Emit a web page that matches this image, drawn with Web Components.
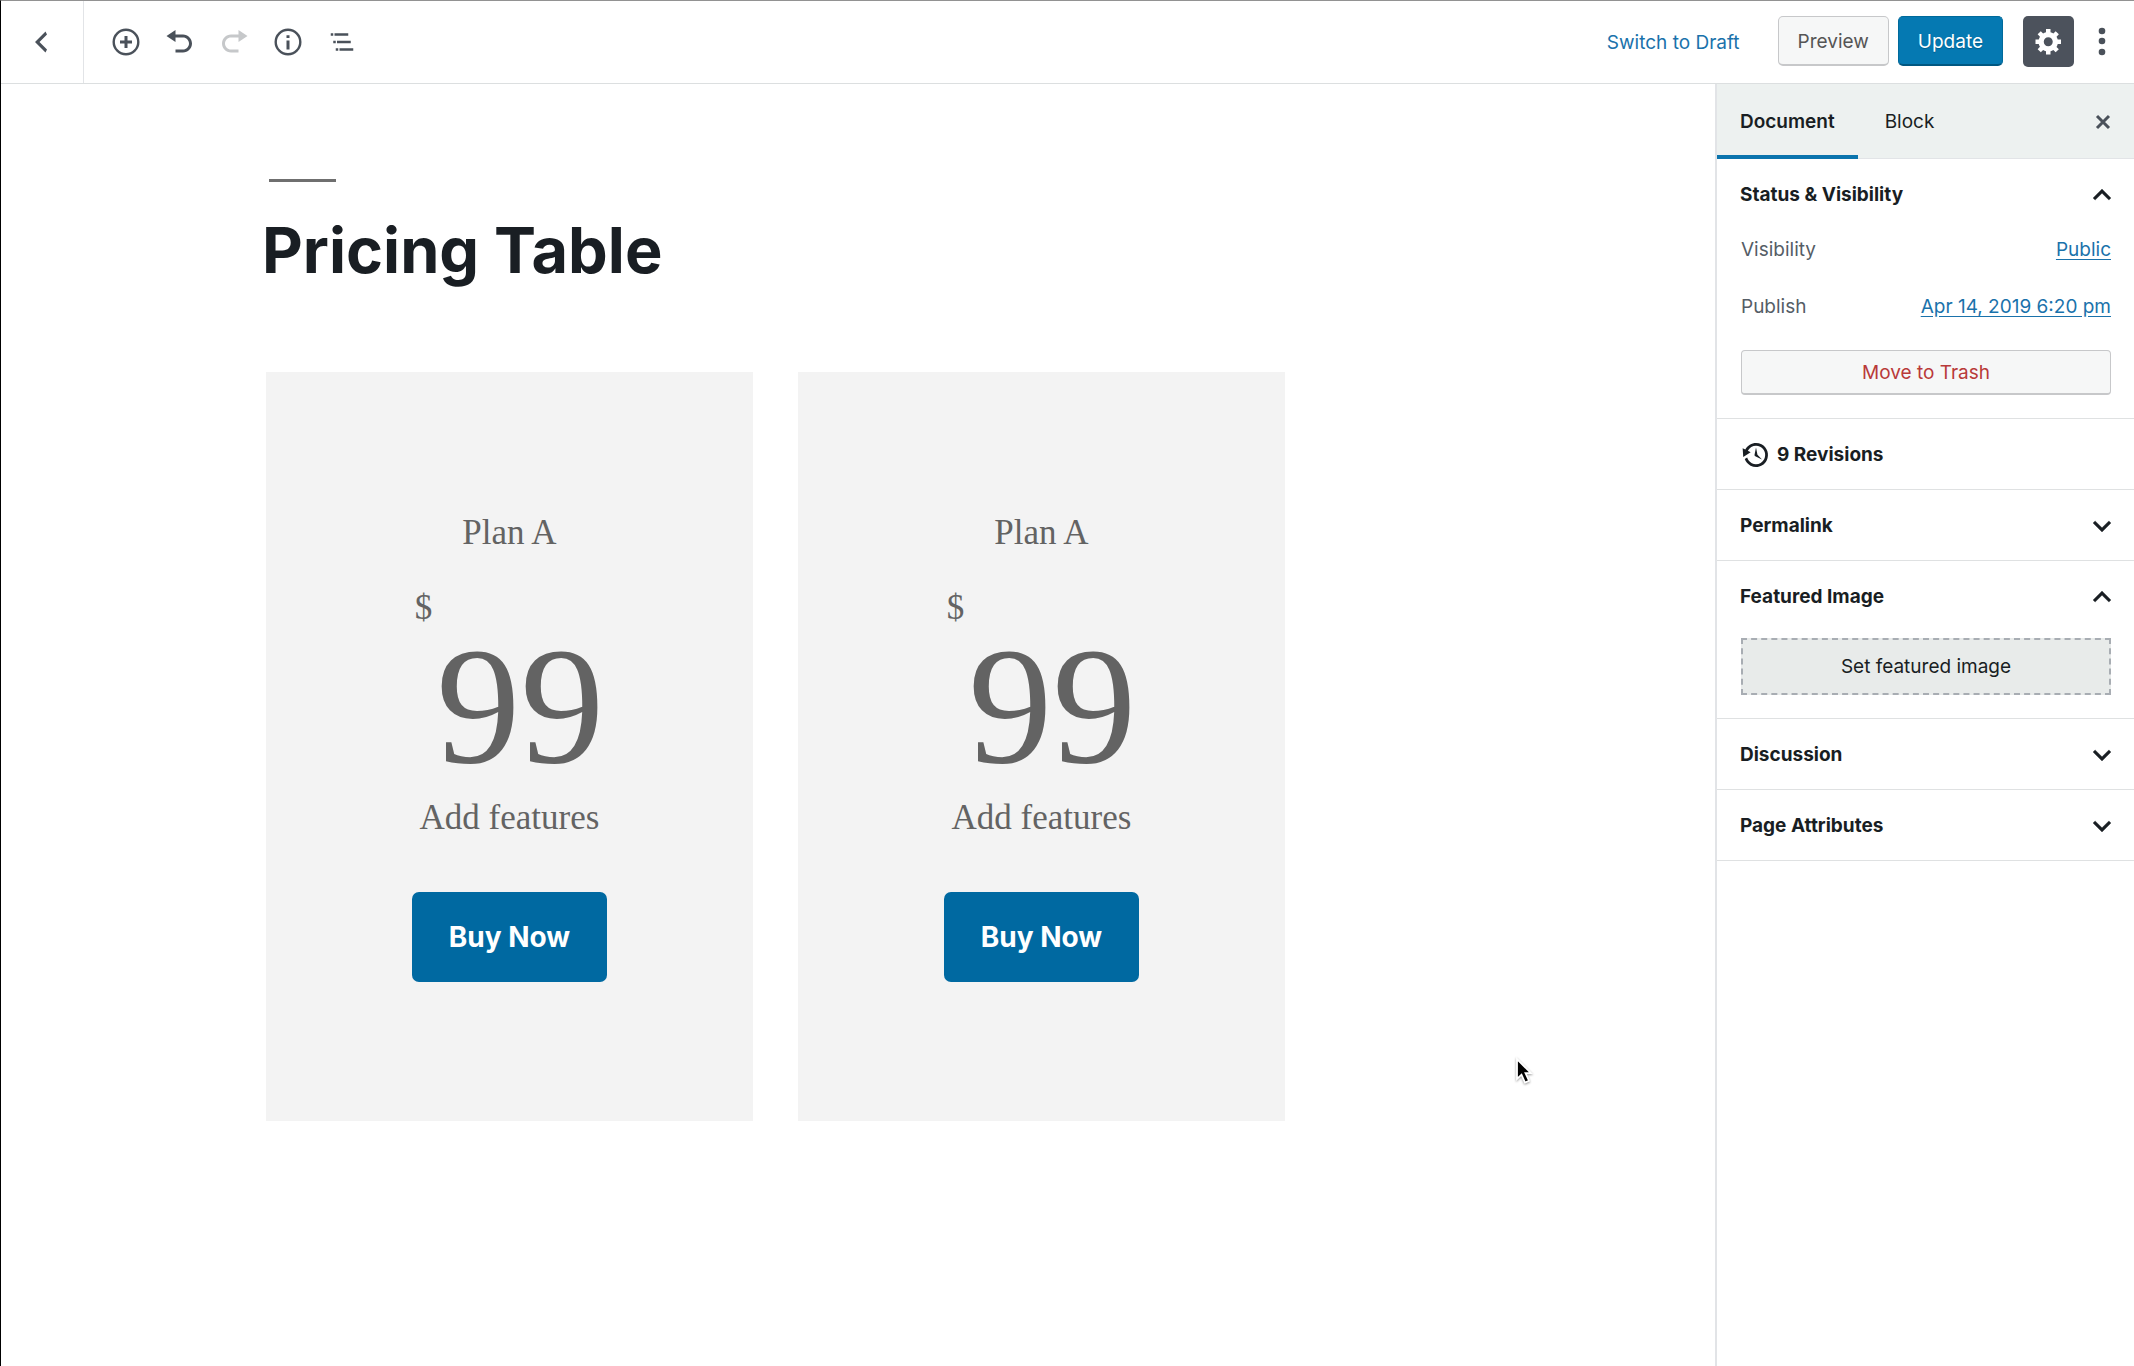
<!DOCTYPE html>
<html lang="en">
<head>
<meta charset="utf-8">
<title>Edit Page</title>
<style>
  body {
    margin: 0;
    background: #fff;
    color: #191e23;
    font-family: Inter, "Liberation Sans", sans-serif;
    font-size: 19px;
    line-height: 28px;
  }
</style>
</head>
<body>
<editor-app>
  <editor-header slot="header"></editor-header>
  <page-canvas slot="canvas">
    <pricing-card plan="Plan A" currency="$" price="99" features="Add features">Buy Now</pricing-card>
    <pricing-card plan="Plan A" currency="$" price="99" features="Add features">Buy Now</pricing-card>
  </page-canvas>
  <editor-sidebar slot="sidebar">
    <panel-section heading="Status &amp; Visibility" open>
      <status-panel></status-panel>
    </panel-section>
    <revisions-link count="9"></revisions-link>
    <panel-section heading="Permalink"></panel-section>
    <panel-section heading="Featured Image" open>
      <featured-image></featured-image>
    </panel-section>
    <panel-section heading="Discussion"></panel-section>
    <panel-section heading="Page Attributes"></panel-section>
  </editor-sidebar>
</editor-app>
<mouse-pointer></mouse-pointer>

<script>
const baseStyle = `
  * { box-sizing: border-box; }
  button { font: inherit; color: inherit; margin: 0; padding: 0; border: 0; background: none; cursor: pointer; }
  svg { display: block; fill: currentColor; }
`;

class BaseElement extends HTMLElement {
  constructor() {
    super();
    this.attachShadow({ mode: "open" });
  }

  connectedCallback() {
    this.shadowRoot.innerHTML = `<style>${baseStyle}</style>${this.template()}`;
  }
}

class EditorApp extends BaseElement {
  template() {
    return `
      <style>
        :host {
          display: flex;
          flex-direction: column;
          min-height: 100vh;
          box-sizing: border-box;
          border-top: 1px solid #929292;
          border-left: 1px solid #000;
        }
        .body { display: flex; flex: 1; }
      </style>
      <slot name="header"></slot>
      <div class="body">
        <slot name="canvas"></slot>
        <slot name="sidebar"></slot>
      </div>
    `;
  }
}

class EditorHeader extends BaseElement {
  template() {
    return `
      <style>
        :host {
          display: flex;
          align-items: center;
          justify-content: space-between;
          height: 83px;
          box-sizing: border-box;
          border-bottom: 1px solid #dcdfe0;
          color: #4a515a;
        }
        .tools, .actions { display: flex; align-items: center; }
        .actions { padding-bottom: 2px; }
        .tools { align-self: stretch; gap: 24px; }
        .back {
          display: flex;
          align-items: center;
          justify-content: center;
          align-self: stretch;
          width: 83px;
          margin-right: 3px;
          padding-right: 3px;
          border-right: 1px solid #e2e4e7;
        }
        button[disabled] { color: #c6c8ca; }
        .switch { color: #1a72ab; margin-right: 38px; padding-top: 3px; }
        .preview, .update {
          height: 50px;
          padding: 3px 19px 0;
          border: 1px solid #c7c8ca;
          border-bottom-width: 2px;
          border-radius: 5px;
          background: #f6f7f7;
          color: #555;
        }
        .update {
          margin: 0 20px 0 9px;
          border-color: #006a9b #006a9b #005781;
          background: #0579b2;
          color: #fff;
          text-shadow: 0 1px 1px #005d8c;
        }
        .settings {
          display: flex;
          align-items: center;
          justify-content: center;
          width: 51px;
          height: 51px;
          border-radius: 5px;
          background: #4c525c;
          color: #fff;
        }
        .more { margin: 0 17px 0 13px; }
      </style>
      <div class="tools">
        <button class="back" aria-label="View pages"><svg width="30" height="30" viewBox="0 0 20 20"><path d="M14 5l-5 5 5 5-1 2-7-7 7-7z"/></svg></button>
        <button aria-label="Add block"><svg width="30" height="30" viewBox="0 0 20 20"><path d="M10 1a9 9 0 1 0 0 18 9 9 0 0 0 0-18zm0 16.400a7.400 7.400 0 1 1 0-14.800 7.400 7.400 0 0 1 0 14.800zM11 6H9v3H6v2h3v3h2v-3h3V9h-3z"/></svg></button>
        <button aria-label="Undo"><svg width="30" height="30" viewBox="0 0 20 20"><path d="M12 5H7V2L1 6l6 4V7h5c2.200 0 4 1.800 4 4s-1.800 4-4 4H7v2h5c3.300 0 6-2.700 6-6s-2.700-6-6-6z"/></svg></button>
        <button aria-label="Redo" disabled><svg width="30" height="30" viewBox="0 0 20 20"><path d="M8 5h5V2l6 4-6 4V7H8c-2.200 0-4 1.800-4 4s1.800 4 4 4h5v2H8c-3.300 0-6-2.700-6-6s2.700-6 6-6z"/></svg></button>
        <button aria-label="Content structure"><svg width="30" height="30" viewBox="0 0 20 20"><path d="M10 1a9 9 0 1 0 0 18 9 9 0 0 0 0-18zm0 16.400a7.400 7.400 0 1 1 0-14.800 7.400 7.400 0 0 1 0 14.800zM9 9h2v6H9zM9 5.500h2v1.800H9z"/></svg></button>
        <button aria-label="Block navigation"><svg width="30" height="30" viewBox="0 0 24 24"><path d="M5 5H3v2h2V5zm3 8h11v-2H8v2zm9-8H6v2h11V5zM7 11H5v2h2v-2zm0 8h2v-2H7v2zm3-2v2h11v-2H10z"/></svg></button>
      </div>
      <div class="actions">
        <button class="switch">Switch to Draft</button>
        <button class="preview">Preview</button>
        <button class="update">Update</button>
        <button class="settings" aria-label="Settings"><svg width="30" height="30" viewBox="0 0 20 20"><path d="M18 12h-2.180c-.170.700-.440 1.350-.810 1.930l1.540 1.540-2.100 2.100-1.540-1.540c-.580.360-1.230.630-1.910.790V19H8v-2.180c-.680-.160-1.330-.430-1.910-.790l-1.540 1.540-2.120-2.120 1.540-1.540c-.360-.580-.630-1.230-.790-1.910H1V9.030h2.170c.160-.700.440-1.350.800-1.940L2.430 5.550l2.100-2.100 1.540 1.540c.580-.370 1.240-.640 1.930-.810V2h3v2.180c.680.160 1.330.430 1.910.790l1.540-1.540 2.120 2.120-1.540 1.540c.360.590.640 1.240.800 1.940H18V12zm-8.500 1.500c1.660 0 3-1.340 3-3s-1.340-3-3-3-3 1.340-3 3 1.340 3 3 3z"/></svg></button>
        <button class="more" aria-label="More"><svg width="30" height="30" viewBox="0 0 30 30"><circle cx="15" cy="5" r="3.300"/><circle cx="15" cy="15" r="3.300"/><circle cx="15" cy="26" r="3.300"/></svg></button>
      </div>
    `;
  }
}

class PageCanvas extends BaseElement {
  template() {
    return `
      <style>
        :host { display: block; flex: 1; padding: 95px 0 0 265px; }
        hr { width: 67px; height: 3px; margin: 0 0 0 3px; border: 0; background: #6f6f6f; }
        h1 { margin: 30px 0 84px -4px; font-size: 63px; line-height: 76px; font-weight: 700; }
        .columns { display: grid; grid-template-columns: 1fr 1fr; gap: 45px; max-width: 1019px; }
      </style>
      <hr>
      <h1>Pricing Table</h1>
      <div class="columns"><slot></slot></div>
    `;
  }
}

class PricingCard extends BaseElement {
  template() {
    return `
      <style>
        :host {
          display: flex;
          flex-direction: column;
          align-items: center;
          box-sizing: border-box;
          padding: 136px 20px 139px;
          background: #f3f3f3;
          color: #636363;
          font-family: "Liberation Serif", serif;
          font-size: 35px;
          line-height: 50px;
        }
        p { margin: 0; }
        .price { display: flex; gap: 4px; margin: 25px 0 8px; }
        .amount { padding-top: 42px; font-size: 168px; line-height: 160px; }
        button {
          height: 90px;
          margin-top: 49px;
          padding: 0 37px;
          border-radius: 7px;
          background: #0069a1;
          color: #fff;
          font: 700 28px/40px Inter, "Liberation Sans", sans-serif;
        }
      </style>
      <p>${this.getAttribute("plan")}</p>
      <div class="price">
        <span>${this.getAttribute("currency")}</span>
        <span class="amount">${this.getAttribute("price")}</span>
      </div>
      <p>${this.getAttribute("features")}</p>
      <button><slot></slot></button>
    `;
  }
}

class EditorSidebar extends BaseElement {
  template() {
    return `
      <style>
        :host {
          display: block;
          flex: none;
          width: 419px;
          box-sizing: border-box;
          border-left: 2px solid #e2e4e7;
        }
        .tabs {
          display: flex;
          height: 75px;
          border-bottom: 1px solid #e2e4e7;
          background: #edf1f0;
        }
        .tabs button { padding: 4px 23px 0; border-bottom: 4px solid transparent; margin-bottom: -1px; }
        .tabs .active { margin-right: 4px; border-bottom-color: #0b74ad; font-weight: 600; }
        .tabs .close { margin-left: auto; color: #4a515a; }
      </style>
      <div class="tabs">
        <button class="active">Document</button>
        <button>Block</button>
        <button class="close" aria-label="Close settings"><svg width="16" height="16" viewBox="0 0 16 16"><path d="M2 2l12 12M14 2L2 14" stroke="currentColor" stroke-width="3"/></svg></button>
      </div>
      <slot></slot>
    `;
  }
}

class PanelSection extends BaseElement {
  template() {
    const open = this.hasAttribute("open");
    const chevron = open
      ? "M12 8l-6 6 1.410 1.410L12 10.830l4.590 4.580L18 14z"
      : "M7.410 8.590L12 13.170l4.590-4.580L18 10l-6 6-6-6z";
    return `
      <style>
        :host { display: block; border-bottom: 1px solid #dfe1e2; }
        h2 { margin: 0; font-size: 19px; line-height: 28px; font-weight: 700; }
        h2 button {
          display: flex;
          align-items: center;
          justify-content: space-between;
          width: 100%;
          height: 70px;
          padding: 1px 14px 0 23px;
        }
        .content { padding: 7px 23px 23px 24px; }
      </style>
      <h2><button aria-expanded="${open}">${this.getAttribute("heading")}<svg width="36" height="36" viewBox="0 0 24 24"><path d="${chevron}" stroke="currentColor" stroke-width=".2"/></svg></button></h2>
      ${open ? `<div class="content"><slot></slot></div>` : ""}
    `;
  }
}

class StatusPanel extends BaseElement {
  template() {
    return `
      <style>
        :host { display: block; color: #555d66; }
        .row { display: flex; justify-content: space-between; margin-bottom: 29px; }
        a { color: #1a72ab; text-underline-offset: 3px; }
        .trash {
          width: 100%;
          height: 45px;
          padding-top: 1px;
          border: 1px solid #c7c8ca;
          border-bottom-width: 2px;
          border-radius: 4px;
          background: #f6f7f7;
          color: #b93a39;
        }
      </style>
      <div class="row"><span>Visibility</span><a href="#visibility">Public</a></div>
      <div class="row"><span>Publish</span><a href="#publish">Apr 14, 2019 6:20 pm</a></div>
      <button class="trash">Move to Trash</button>
    `;
  }
}

class RevisionsLink extends BaseElement {
  template() {
    return `
      <style>
        :host { display: block; border-bottom: 1px solid #dfe1e2; }
        a {
          display: flex;
          align-items: center;
          gap: 6px;
          height: 70px;
          padding: 1px 24px 0;
          color: inherit;
          font-weight: 700;
          text-decoration: none;
        }
      </style>
      <a href="#revisions"><svg width="30" height="30" viewBox="0 0 20 20"><path d="M13.650 2.880c3.930 2.010 5.480 6.840 3.470 10.770s-6.830 5.480-10.770 3.470c-1.870-.960-3.200-2.560-3.860-4.400l1.640-1.030c.450 1.570 1.520 2.950 3.080 3.760 3.010 1.540 6.690.350 8.230-2.660 1.550-3.010.360-6.690-2.650-8.240C9.780 3.010 6.100 4.200 4.560 7.210l1.880.970-4.950 3.080-.390-5.820 1.780.910C4.900 2.400 9.750.890 13.650 2.880zm-4.360 7.830C9.110 10.530 9 10.280 9 10c0-.070.030-.120.040-.190h-.010L10 5l.970 4.810L14 13l-4.500-2.120.020-.020c-.080-.040-.160-.090-.230-.150z"/></svg>${this.getAttribute("count")} Revisions</a>
    `;
  }
}

class FeaturedImage extends BaseElement {
  template() {
    return `
      <style>
        :host { display: block; }
        button {
          width: 100%;
          height: 57px;
          border: 2px dashed #a8adb3;
          background: #e8ebea;
        }
      </style>
      <button>Set featured image</button>
    `;
  }
}

class MousePointer extends BaseElement {
  template() {
    return `
      <style>
        :host { position: absolute; left: 71%; top: 1057px; pointer-events: none; }
        svg { filter: drop-shadow(0 1px 1px rgba(0, 0, 0, .4)); }
      </style>
      <svg width="18" height="28" viewBox="0 0 18 28"><path d="M2 2v20l4.500-4.300 3.500 7.800 4-1.800-3.500-7.500H16z" fill="#000" stroke="#fff" stroke-width="1.800"/></svg>
    `;
  }
}

customElements.define("editor-app", EditorApp);
customElements.define("editor-header", EditorHeader);
customElements.define("page-canvas", PageCanvas);
customElements.define("pricing-card", PricingCard);
customElements.define("editor-sidebar", EditorSidebar);
customElements.define("panel-section", PanelSection);
customElements.define("status-panel", StatusPanel);
customElements.define("revisions-link", RevisionsLink);
customElements.define("featured-image", FeaturedImage);
customElements.define("mouse-pointer", MousePointer);
</script>
</body>
</html>
